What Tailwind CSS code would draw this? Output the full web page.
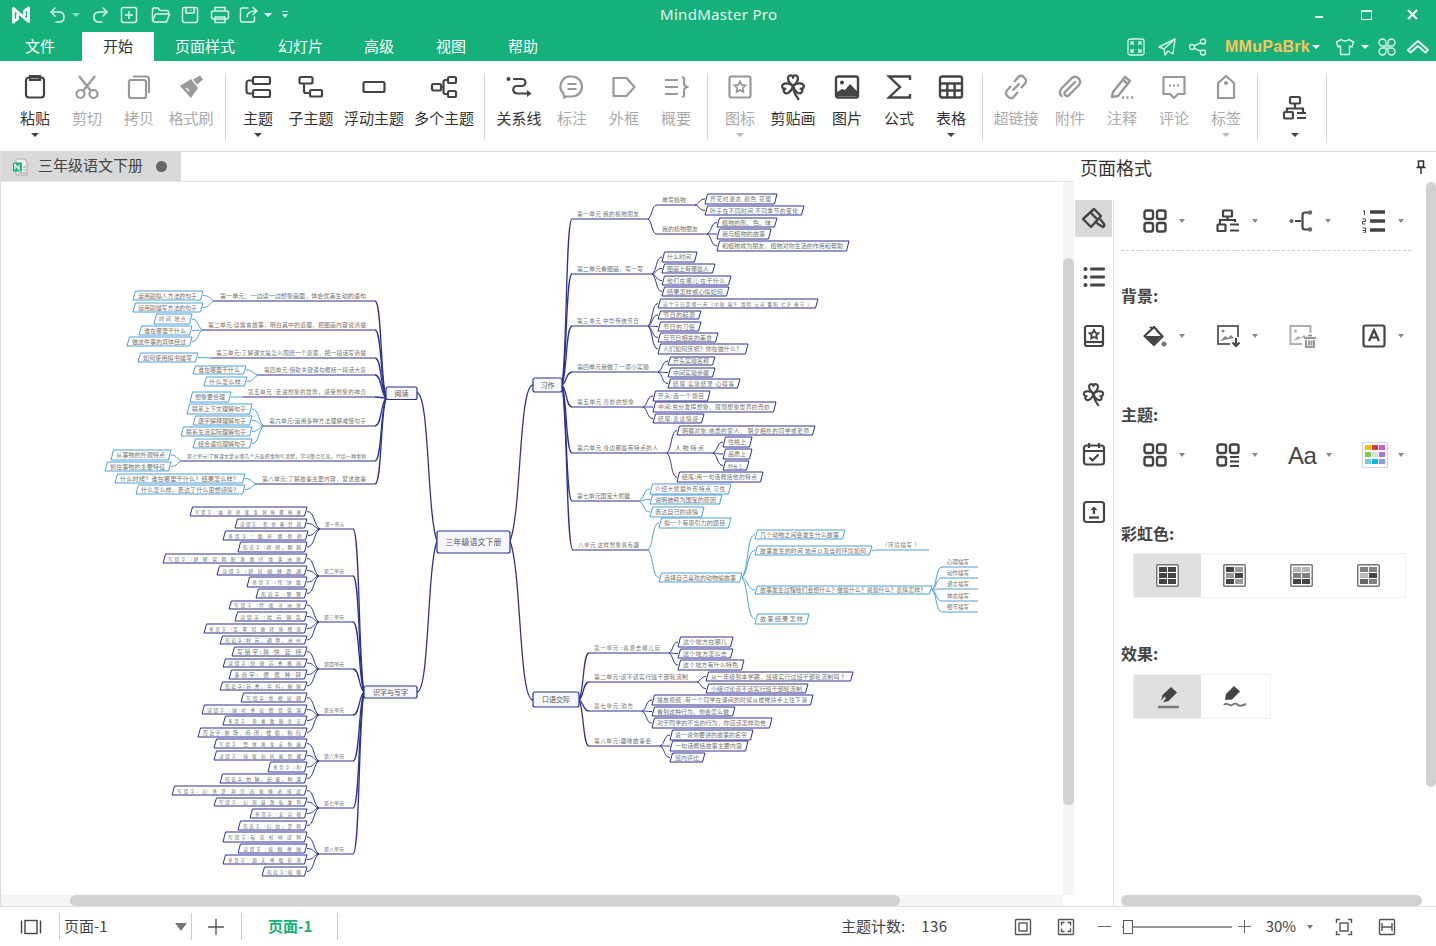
<!DOCTYPE html>
<html lang="zh">
<head>
<meta charset="utf-8">
<title>MindMaster Pro</title>
<script src="https://cdn.jsdelivr.net/npm/@tailwindcss/browser@4"></script>
</head>
<body>
<div class="w-[1436px] h-[946px] overflow-hidden flex flex-col bg-white text-[#333] [font-family:'Noto_Sans_CJK_SC','Noto_Sans',sans-serif]">

<!-- title + tabs -->
<header class="relative h-[61px] shrink-0 bg-[#16b07a] text-white">
  <div class="flex h-[29px] items-center">
    <svg class="ml-[10px] w-[22px] h-[20px]" viewBox="0 0 22 20" fill="none" stroke="#fff" stroke-width="2.800" stroke-linejoin="round" stroke-linecap="round"><path d="M3.500 17V3.500L18.500 16.500V3"/><path d="M3.500 17l4-3v-4M18.500 3l-4 3v4"/></svg>
    <svg class="ml-[17px] w-[18px] h-[18px]" viewBox="0 0 18 18" fill="none" stroke="#d8f3e8" stroke-width="1.600" stroke-linecap="round" stroke-linejoin="round"><path d="M6 2L2 6l4 4"/><path d="M2 6h8c3 0 5 2 5 5s-2 5-5 5H7"/></svg>
    <span class="ml-[5px] w-0 h-0 border-x-[4px] border-t-[4px] border-x-transparent border-t-[#8fd8bd]"></span>
    <svg class="ml-[11px] w-[18px] h-[18px]" viewBox="0 0 18 18" fill="none" stroke="#d8f3e8" stroke-width="1.600" stroke-linecap="round" stroke-linejoin="round"><path d="M12 2l4 4-4 4"/><path d="M16 6H8c-3 0-5 2-5 5s2 5 5 5h3"/></svg>
    <svg class="ml-[11px] w-[18px] h-[18px]" viewBox="0 0 18 18" fill="none" stroke="#d8f3e8" stroke-width="1.500"><rect x="1.500" y="1.500" width="15" height="15" rx="2"/><path d="M9 5v8M5 9h8"/></svg>
    <svg class="ml-[13px] w-[20px] h-[18px]" viewBox="0 0 20 18" fill="none" stroke="#d8f3e8" stroke-width="1.500" stroke-linejoin="round"><path d="M1.500 15V3.500a1.500 1.500 0 0 1 1.500-1.500h4l2 2.500h7a1.500 1.500 0 0 1 1.500 1.500V8"/><path d="M1.500 15l3-7h14l-3 8H3z"/></svg>
    <svg class="ml-[10px] w-[18px] h-[18px]" viewBox="0 0 18 18" fill="none" stroke="#d8f3e8" stroke-width="1.500"><rect x="1.500" y="1.500" width="15" height="15" rx="2"/><path d="M5 2v5h8V2M10 4v1"/></svg>
    <svg class="ml-[11px] w-[20px] h-[18px]" viewBox="0 0 20 18" fill="none" stroke="#d8f3e8" stroke-width="1.500" stroke-linejoin="round"><path d="M5 5V1.500h10V5"/><rect x="1.500" y="5" width="17" height="8" rx="2"/><path d="M5 11h10v5.500H5z"/></svg>
    <svg class="ml-[9px] w-[20px] h-[18px]" viewBox="0 0 20 18" fill="none" stroke="#d8f3e8" stroke-width="1.500" stroke-linecap="round" stroke-linejoin="round"><path d="M9 2H3a1.500 1.500 0 0 0-1.500 1.500v11A1.500 1.500 0 0 0 3 16h11a1.500 1.500 0 0 0 1.500-1.500V11"/><path d="M8 11c0-4 3-6 9-6M14 1.500L18 5l-4 3.500"/></svg>
    <span class="ml-[5px] w-0 h-0 border-x-[4px] border-t-[4px] border-x-transparent border-t-white"></span>
    <span class="ml-[10px] flex flex-col items-center gap-[2px]"><span class="w-[6px] h-[1.500px] bg-[#d8f3e8]"></span><span class="w-0 h-0 border-x-[3.500px] border-t-[4px] border-x-transparent border-t-[#d8f3e8]"></span></span>
    <div class="ml-auto flex items-center">
      <span class="w-[8px] h-[2px] bg-[#e6f7f0] mt-[4px]"></span>
      <span class="ml-[38px] w-[11px] h-[10px] border-[1.500px] border-t-[2.500px] border-[#e6f7f0]"></span>
      <svg class="ml-[35px] mr-[18px] w-[11px] h-[11px]" viewBox="0 0 11 11" stroke="#fff" stroke-width="2"><path d="M1 1l9 9M10 1l-9 9"/></svg>
    </div>
  </div>
  <span class="absolute left-[660px] top-[4px] text-[15px] leading-5 text-[#e4f6ef] tracking-[0.3px] [font-family:'Noto_Sans',sans-serif]">MindMaster Pro</span>
  <nav class="absolute left-0 top-[32px] h-[29px] w-full flex items-center text-[15px]">
    <span class="ml-[25px] w-[57px]">文件</span>
    <span class="w-[72px] h-full bg-white text-[#333] flex items-center justify-center">开始</span>
    <span class="ml-[21px] w-[103px]">页面样式</span>
    <span class="w-[86px]">幻灯片</span>
    <span class="w-[72px]">高级</span>
    <span class="w-[72px]">视图</span>
    <span class="w-[72px]">帮助</span>
    <div class="ml-auto flex items-center">
      <svg class="w-[18px] h-[18px]" viewBox="0 0 18 18" fill="none" stroke="#d8f3e8" stroke-width="1.300"><rect x="1" y="1" width="16" height="16" rx="2"/><path d="M4 7V4h3M14 7V4h-3M4 11v3h3M14 11v3h-3M4 4l3 3M14 4l-3 3M4 14l3-3M14 14l-3-3"/></svg>
      <svg class="ml-[13px] w-[18px] h-[18px]" viewBox="0 0 18 18" fill="none" stroke="#d8f3e8" stroke-width="1.400" stroke-linejoin="round"><path d="M17 1L1 9l5 2 1 6 3-4 5 3z"/><path d="M17 1L6 11"/></svg>
      <svg class="ml-[12px] w-[19px] h-[18px]" viewBox="0 0 19 18" fill="none" stroke="#d8f3e8" stroke-width="1.400"><circle cx="15" cy="3.500" r="2.500"/><circle cx="15" cy="14.500" r="2.500"/><circle cx="4" cy="9" r="2.500"/><path d="M6.200 7.800l6.600-3.200M6.200 10.200l6.600 3.200"/></svg>
      <span class="ml-[18px] font-bold text-[#fcc45e] [font-family:'Liberation_Sans',sans-serif] text-[16px] tracking-[0.3px]">MMuPaBrk</span>
      <span class="ml-[2px] w-0 h-0 border-x-[4px] border-t-[4px] border-x-transparent border-t-white"></span>
      <svg class="ml-[15px] w-[20px] h-[18px]" viewBox="0 0 20 18" fill="none" stroke="#d8f3e8" stroke-width="1.400" stroke-linejoin="round"><path d="M6.500 1.500c1 2 6 2 7 0l5 2.500-1.500 5-2.500-1v8.500h-9V8l-2.500 1-1.500-5z"/></svg>
      <span class="ml-[6px] w-0 h-0 border-x-[4px] border-t-[4px] border-x-transparent border-t-white"></span>
      <svg class="ml-[9px] w-[18px] h-[18px]" viewBox="0 0 18 18" fill="none" stroke="#d8f3e8" stroke-width="1.400"><path d="M8 8H4.500A3.500 3.500 0 1 1 8 4.500zM10 8h3.500A3.500 3.500 0 1 0 10 4.500zM8 10H4.500A3.500 3.500 0 1 0 8 13.500zM10 10h3.500a3.500 3.500 0 1 1-3.500 3.500z"/></svg>
      <svg class="ml-[10px] mr-[6px] w-[24px] h-[18px]" viewBox="0 0 24 18" fill="none" stroke="#e6f7f0" stroke-width="2" stroke-linejoin="round"><path d="M2 12L12 3l10 9-2.500 2.500L12 8l-7.500 6.500z"/></svg>
    </div>
  </nav>
</header>

<!-- ribbon -->
<section class="h-[91px] shrink-0 border-b border-[#d8d8d8] flex pl-[9px] text-[15px] leading-5 whitespace-nowrap">
  <div class="w-[52px] pt-[12px] flex flex-col items-center"><svg class="w-[28px] h-[28px]" viewBox="0 0 28 28" fill="none" stroke="#444" stroke-width="2.200"><rect x="5" y="4.500" width="18" height="20" rx="3"/><path d="M9 4.500V3h10v4H9z"/></svg><span class="mt-[7px]">粘贴</span><span class="mt-[5px] w-0 h-0 border-x-[4px] border-t-[4px] border-x-transparent border-t-[#444]"></span></div>
  <div class="w-[52px] pt-[12px] flex flex-col items-center text-[#aaa]"><svg class="w-[28px] h-[28px]" viewBox="0 0 28 28" fill="none" stroke="#999" stroke-width="2.200"><circle cx="7.500" cy="21" r="4"/><circle cx="20.500" cy="21" r="4"/><path d="M10 18L22 3M18 18L6 3"/></svg><span class="mt-[7px]">剪切</span></div>
  <div class="w-[52px] pt-[12px] flex flex-col items-center text-[#aaa]"><svg class="w-[28px] h-[28px]" viewBox="0 0 28 28" fill="none" stroke="#999" stroke-width="2.200"><rect x="4" y="7" width="17" height="18" rx="2"/><path d="M8 3.500h13a3 3 0 0 1 3 3V20" /></svg><span class="mt-[7px]">拷贝</span></div>
  <div class="w-[52px] pt-[12px] flex flex-col items-center text-[#aaa]"><svg class="w-[28px] h-[28px]" viewBox="0 0 28 28"><path fill="#999" d="M3 13l11-7 7 9-7 10z"/><path fill="#999" d="M16 6.500l4 5 6-5-3-4z"/><path d="M9 15l3 3" stroke="#fff" stroke-width="1.200"/></svg><span class="mt-[7px]">格式刷</span></div>
  <span class="ml-[8px] mt-[12px] w-px h-[67px] bg-[#d4d4d4]"></span>
  <div class="ml-[6px] w-[52px] pt-[12px] flex flex-col items-center"><svg class="w-[28px] h-[28px]" viewBox="0 0 28 28" fill="none" stroke="#444" stroke-width="2.200"><rect x="9" y="4" width="17" height="7" rx="1.500"/><rect x="9" y="17" width="17" height="7" rx="1.500"/><path d="M9 7.500H5a2.500 2.500 0 0 0-2.500 2.500v8A2.500 2.500 0 0 0 5 20.500h4"/></svg><span class="mt-[7px]">主题</span><span class="mt-[5px] w-0 h-0 border-x-[4px] border-t-[4px] border-x-transparent border-t-[#444]"></span></div>
  <div class="w-[54px] pt-[12px] flex flex-col items-center"><svg class="w-[28px] h-[28px]" viewBox="0 0 28 28" fill="none" stroke="#444" stroke-width="2.200"><rect x="2.500" y="4" width="13" height="6.500" rx="1.500"/><rect x="13" y="17" width="12" height="6.500" rx="1.500"/><path d="M7 10.500V18a2 2 0 0 0 2 2h4"/></svg><span class="mt-[7px]">子主题</span></div>
  <div class="w-[72px] pt-[12px] flex flex-col items-center"><svg class="w-[28px] h-[28px]" viewBox="0 0 28 28" fill="none" stroke="#444" stroke-width="2.200"><rect x="3.500" y="9" width="21" height="10" rx="1.500"/></svg><span class="mt-[7px]">浮动主题</span></div>
  <div class="w-[68px] pt-[12px] flex flex-col items-center"><svg class="w-[28px] h-[28px]" viewBox="0 0 28 28" fill="none" stroke="#444" stroke-width="2.200"><rect x="2" y="11" width="9" height="6.500" rx="1.500"/><rect x="18" y="4" width="8" height="6" rx="1.500"/><rect x="18" y="18" width="8" height="6" rx="1.500"/><path d="M11 14h2.500V9a2 2 0 0 1 2-2H18M13.500 14v5a2 2 0 0 0 2 2H18"/></svg><span class="mt-[7px]">多个主题</span></div>
  <span class="ml-[6px] mt-[12px] w-px h-[67px] bg-[#d4d4d4]"></span>
  <div class="ml-[8px] w-[52px] pt-[12px] flex flex-col items-center"><svg class="w-[28px] h-[28px]" viewBox="0 0 28 28" fill="none" stroke="#444" stroke-width="2.200" stroke-linecap="round"><circle cx="3.500" cy="6" r="2" fill="#444" stroke="none"/><path d="M9 6h8a3.500 3.500 0 0 1 0 7H12a3.500 3.500 0 0 0 0 7.500h10"/><path d="M22 17l4.500 3.500L22 24z" fill="#444" stroke="none"/></svg><span class="mt-[7px]">关系线</span></div>
  <div class="ml-[1px] w-[52px] pt-[12px] flex flex-col items-center text-[#aaa]"><svg class="w-[28px] h-[28px]" viewBox="0 0 28 28" fill="none" stroke="#999" stroke-width="2.200"><path d="M14 3.500a10 10 0 0 1 0 20H7l-.5 2-1-5A10 10 0 0 1 14 3.500z"/><path d="M9.500 11h9M9.500 16h9"/></svg><span class="mt-[7px]">标注</span></div>
  <div class="w-[52px] pt-[12px] flex flex-col items-center text-[#aaa]"><svg class="w-[28px] h-[28px]" viewBox="0 0 28 28" fill="none" stroke="#999" stroke-width="2.200" stroke-linejoin="round"><path d="M3.500 5h13l8 9-8 9h-13z"/></svg><span class="mt-[7px]">外框</span></div>
  <div class="w-[52px] pt-[12px] flex flex-col items-center text-[#aaa]"><svg class="w-[28px] h-[28px]" viewBox="0 0 28 28" fill="none" stroke="#999" stroke-width="2.200"><path d="M3 7h13M3 14h13M3 21h13"/><path d="M20 4c3 0 2 3 2 6s1 3 3 4c-2 1-3 1-3 4s1 6-2 6"/></svg><span class="mt-[7px]">概要</span></div>
  <span class="ml-[5px] mt-[12px] w-px h-[67px] bg-[#d4d4d4]"></span>
  <div class="ml-[6px] w-[52px] pt-[12px] flex flex-col items-center text-[#aaa]"><svg class="w-[28px] h-[28px]" viewBox="0 0 28 28" fill="none" stroke="#999" stroke-width="2.200"><rect x="3.500" y="3.500" width="21" height="21" rx="2"/><path d="M14 8.500l1.700 3.500 3.800.5-2.800 2.600.7 3.800-3.400-1.800-3.400 1.800.7-3.800-2.800-2.600 3.800-.5z" stroke-width="1.800"/></svg><span class="mt-[7px]">图标</span><span class="mt-[5px] w-0 h-0 border-x-[4px] border-t-[4px] border-x-transparent border-t-[#bbb]"></span></div>
  <div class="ml-[1px] w-[52px] pt-[12px] flex flex-col items-center"><svg class="w-[28px] h-[28px]" viewBox="0 0 24 24" fill="none" stroke="#444" stroke-width="2" stroke-linejoin="round"><path d="M12 11C7 8 6.500 2 10 2c1.200 0 2 1 2 2 0-1 .8-2 2-2 3.500 0 3 6-2 9z"/><path d="M12 11C7 8 6.500 2 10 2c1.200 0 2 1 2 2 0-1 .8-2 2-2 3.500 0 3 6-2 9z" transform="rotate(-110 12 11)"/><path d="M12 11C7 8 6.500 2 10 2c1.200 0 2 1 2 2 0-1 .8-2 2-2 3.500 0 3 6-2 9z" transform="rotate(110 12 11)"/><path d="M12 11c0 4 2 8 5 12"/></svg><span class="mt-[7px]">剪贴画</span></div>
  <div class="ml-[2px] w-[52px] pt-[12px] flex flex-col items-center"><svg class="w-[28px] h-[28px]" viewBox="0 0 28 28" fill="none" stroke="#444" stroke-width="2.400"><rect x="3" y="3.500" width="22" height="21" rx="2"/><circle cx="9" cy="9.500" r="2" fill="#444" stroke="none"/><path d="M4 23v-4l5-3 3 1 5-6 7 7v5z" fill="#444" stroke="none"/></svg><span class="mt-[7px]">图片</span></div>
  <div class="w-[52px] pt-[12px] flex flex-col items-center"><svg class="w-[28px] h-[28px]" viewBox="0 0 28 28" fill="none" stroke="#444" stroke-width="2.400"><path d="M25 7V3.500H4L15 14 4 24.500h21V21"/></svg><span class="mt-[7px]">公式</span></div>
  <div class="w-[52px] pt-[12px] flex flex-col items-center"><svg class="w-[28px] h-[28px]" viewBox="0 0 28 28" fill="none" stroke="#444" stroke-width="2.400"><rect x="3" y="3.500" width="22" height="21" rx="2"/><path d="M3 10.500h22M3 17.500h22M10.300 10.500v14M17.600 10.500v14"/></svg><span class="mt-[7px]">表格</span><span class="mt-[5px] w-0 h-0 border-x-[4px] border-t-[4px] border-x-transparent border-t-[#444]"></span></div>
  <span class="ml-[5px] mt-[12px] w-px h-[67px] bg-[#d4d4d4]"></span>
  <div class="ml-[7px] w-[52px] pt-[12px] flex flex-col items-center text-[#aaa]"><svg class="w-[28px] h-[28px]" viewBox="0 0 28 28" fill="none" stroke="#999" stroke-width="2.400"><path d="M12 9l4-4.500a3.500 3.500 0 0 1 6 0l1 1a3.500 3.500 0 0 1 0 5L19 15"/><path d="M16 19l-4 4.500a3.500 3.500 0 0 1-6 0l-1-1a3.500 3.500 0 0 1 0-5L9 13"/><path d="M10.500 17.500l7-7"/></svg><span class="mt-[7px]">超链接</span></div>
  <div class="ml-[2px] w-[52px] pt-[12px] flex flex-col items-center text-[#aaa]"><svg class="w-[28px] h-[28px]" viewBox="0 0 28 28" fill="none" stroke="#999" stroke-width="2.400" stroke-linecap="round"><path d="M19 9L9 19a2.500 2.500 0 0 0 3.500 3.500L23 12a5 5 0 0 0-7-7L5.500 15.500c-2 2.500-2 5.500 0 7.500"/></svg><span class="mt-[7px]">附件</span></div>
  <div class="w-[52px] pt-[12px] flex flex-col items-center text-[#aaa]"><svg class="w-[28px] h-[28px]" viewBox="0 0 28 28" fill="none" stroke="#999" stroke-width="2.400" stroke-linejoin="round"><path d="M5 19L17 4l5 4L10 23l-6 1z"/><path d="M15 7l5 4"/><path d="M14 24.500h2M18.500 24.500h2M23 24.500h2"/></svg><span class="mt-[7px]">注释</span></div>
  <div class="w-[52px] pt-[12px] flex flex-col items-center text-[#aaa]"><svg class="w-[28px] h-[28px]" viewBox="0 0 28 28" fill="none" stroke="#999" stroke-width="2.200" stroke-linejoin="round"><path d="M3.500 4h21v17H18l-4 4-4-4H3.500z"/><path d="M9 12.500h2M13 12.500h2M17 12.500h2"/></svg><span class="mt-[7px]">评论</span></div>
  <div class="w-[52px] pt-[12px] flex flex-col items-center text-[#aaa]"><svg class="w-[28px] h-[28px]" viewBox="0 0 28 28" fill="none" stroke="#999" stroke-width="2.200" stroke-linejoin="round"><path d="M6 10l8-7 8 7v15H6z"/><circle cx="14" cy="10" r="2" fill="#999" stroke="none"/></svg><span class="mt-[7px]">标签</span><span class="mt-[5px] w-0 h-0 border-x-[4px] border-t-[4px] border-x-transparent border-t-[#bbb]"></span></div>
  <span class="ml-[5px] mt-[12px] w-px h-[67px] bg-[#d4d4d4]"></span>
  <div class="ml-[11px] w-[52px] pt-[33px] flex flex-col items-center"><svg class="w-[28px] h-[28px]" viewBox="0 0 28 28" fill="none" stroke="#444" stroke-width="2.200"><rect x="9" y="3" width="10" height="6.500" rx="1"/><path d="M14 9.500v4M6 18v-3.500h16V18"/><rect x="3" y="18" width="9" height="6.500" rx="1"/><path d="M16 19h9M16 24h9"/></svg><span class="mt-[11px] w-0 h-0 border-x-[4px] border-t-[4px] border-x-transparent border-t-[#444]"></span></div>
  <span class="ml-[5px] mt-[12px] w-px h-[69px] bg-[#d4d4d4]"></span>
</section>

<!-- workspace -->
<main class="flex h-[754px] shrink-0">
  <div class="w-[1074px] flex flex-col border-l border-[#dedede]">
    <div class="h-[30px] shrink-0 border-b border-[#e4e4e4] flex">
      <div class="w-[180px] h-[29px] bg-[#d9d9d9] flex items-center">
        <svg class="ml-[11px] w-[16px] h-[18px]" viewBox="0 0 16 18"><path d="M4 1h8l3 3v13H4z" fill="#f4f4f4" stroke="#aaa"/><rect x="1" y="4.500" width="9" height="9" fill="#16b07a"/><path d="M3 11.500v-5l4 5v-5" fill="none" stroke="#fff" stroke-width="1.300"/><path d="M11 9h3M11 12h3M6 15h8" stroke="#999"/></svg>
        <span class="ml-[10px] pb-[2px] text-[15px] text-[#444]">三年级语文下册</span>
        <span class="ml-[13px] w-[11px] h-[11px] rounded-full bg-[#666]"></span>
      </div>
      <span class="w-[2px] bg-white"></span>
      <span class="flex-1"></span>
    </div>
    <div class="flex h-[713px] shrink-0">
      <svg id="map" class="w-[1062px] h-[713px] shrink-0" viewBox="1 182 1062 713"></svg>
      <div class="w-[11px] bg-[#f5f5f5] pt-[76px]"><div class="h-[547px] rounded-full bg-[#d2d2d2]"></div></div>
    </div>
    <div class="h-[11px] shrink-0 flex">
      <div class="w-[1062px] bg-[#f5f5f5] pl-[69px]"><div class="w-[830px] h-full rounded-full bg-[#d2d2d2]"></div></div>
    </div>
  </div>

  <aside class="w-[362px] flex flex-col">
    <div class="h-[32px] shrink-0 flex items-center pl-[6px] pr-[10px] pb-[2px]">
      <span class="text-[18px] leading-6 text-[#333]">页面格式</span>
      <svg class="ml-auto w-[10px] h-[14px]" viewBox="0 0 10 14" fill="none" stroke="#333" stroke-width="1.500"><path d="M2.500 1h5v6h-5zM.5 7.500h9M5 8v6"/></svg>
    </div>
    <div class="flex flex-1 min-h-0">
      <div class="w-[40px] mt-[16px] border-r border-[#dedede] pl-px flex flex-col gap-[22px]">
        <div class="w-[37px] h-[37px] bg-[#d9d9d9] flex items-center justify-center"><svg class="w-[26px] h-[26px]" viewBox="0 0 26 26" fill="none" stroke="#444" stroke-width="2.400" stroke-linejoin="round"><path d="M2 13L13 3l7 7-10 11z"/><path d="M14 15l3 3 5 3a2 2 0 0 0 1-3l-4-5"/><path d="M10 7l7 7"/></svg></div>
        <div class="w-[37px] h-[37px] -mt-px flex items-center justify-center"><svg class="w-[24px] h-[24px]" viewBox="0 0 24 24" fill="#444"><circle cx="3.500" cy="4" r="2"/><circle cx="3.500" cy="12" r="2"/><circle cx="3.500" cy="20" r="2"/><rect x="8" y="2.500" width="15" height="3" rx="1"/><rect x="8" y="10.500" width="15" height="3" rx="1"/><rect x="8" y="18.500" width="15" height="3" rx="1"/></svg></div>
        <div class="w-[37px] h-[37px] flex items-center justify-center"><svg class="w-[24px] h-[24px]" viewBox="0 0 24 24" fill="none" stroke="#444" stroke-width="2.200"><rect x="3" y="2" width="18" height="20" rx="2"/><path d="M3 18h18"/><path d="M12 6l1.500 2.800 3 .4-2.200 2.100.5 3-2.800-1.400-2.800 1.400.5-3-2.200-2.100 3-.4z" stroke-width="1.800"/></svg></div>
        <div class="w-[37px] h-[37px] flex items-center justify-center"><svg class="w-[25px] h-[25px]" viewBox="0 0 24 24" fill="none" stroke="#444" stroke-width="2" stroke-linejoin="round"><path d="M12 11C7 8 6.500 2 10 2c1.200 0 2 1 2 2 0-1 .8-2 2-2 3.500 0 3 6-2 9z"/><path d="M12 11C7 8 6.500 2 10 2c1.200 0 2 1 2 2 0-1 .8-2 2-2 3.500 0 3 6-2 9z" transform="rotate(-110 12 11)"/><path d="M12 11C7 8 6.500 2 10 2c1.200 0 2 1 2 2 0-1 .8-2 2-2 3.500 0 3 6-2 9z" transform="rotate(110 12 11)"/><path d="M12 11c0 4 2 8 5 12"/></svg></div>
        <div class="w-[37px] h-[37px] flex items-center justify-center"><svg class="w-[24px] h-[24px]" viewBox="0 0 24 24" fill="none" stroke="#444" stroke-width="2.200"><rect x="2" y="3.500" width="20" height="19" rx="2.500"/><path d="M2 9h20M7 1v5M17 1v5"/><path d="M7.500 15.500l3 3 6-6"/></svg></div>
        <div class="w-[37px] h-[37px] -mt-px flex items-center justify-center"><svg class="w-[24px] h-[24px]" viewBox="0 0 24 24" fill="none" stroke="#444" stroke-width="2.200"><rect x="2" y="2" width="20" height="20" rx="2.500"/><path d="M7 17.500h10" /><path d="M12 14V8" /><path d="M8.500 10L12 6.500 15.500 10z" fill="#444" stroke="none"/></svg></div>
      </div>
      <div class="w-[312px] flex flex-col">
        <div class="flex-1 pl-[7px] pt-[16px]">
          <div class="flex h-[42px] items-center">
            <div class="w-[73px] pl-[22px] flex items-center"><svg class="w-[24px] h-[24px]" viewBox="0 0 24 24" fill="none" stroke="#444" stroke-width="2.400"><rect x="1.500" y="1.500" width="8.500" height="8.500" rx="2"/><rect x="14" y="1.500" width="8.500" height="8.500" rx="2"/><rect x="1.500" y="14" width="8.500" height="8.500" rx="2"/><rect x="14" y="14" width="8.500" height="8.500" rx="2"/></svg><span class="ml-[12px] w-0 h-0 border-x-[3.500px] border-t-[4px] border-x-transparent border-t-[#888]"></span></div>
            <div class="w-[73px] pl-[22px] flex items-center"><svg class="w-[24px] h-[24px]" viewBox="0 0 24 24" fill="none" stroke="#444" stroke-width="2.200"><rect x="7" y="1.500" width="9" height="6" rx=".5"/><path d="M11.500 7.500V11M4 15v-4h15v2"/><rect x="1.500" y="15.500" width="8" height="6.500" rx=".5"/><path d="M14 15.500h9M14 21.500h9"/></svg><span class="ml-[12px] w-0 h-0 border-x-[3.500px] border-t-[4px] border-x-transparent border-t-[#888]"></span></div>
            <div class="w-[73px] pl-[22px] flex items-center"><svg class="w-[24px] h-[24px]" viewBox="0 0 24 24" fill="none" stroke="#444" stroke-width="2.200"><circle cx="2.500" cy="12" r="2" fill="#666" stroke="none"/><circle cx="21" cy="3.500" r="2.200" fill="#666" stroke="none"/><circle cx="21" cy="20.500" r="2.200" fill="#666" stroke="none"/><path d="M6 12h6M19 3.500h-3a2.500 2.500 0 0 0-2.500 2.500v12a2.500 2.500 0 0 0 2.500 2.500h3"/></svg><span class="ml-[12px] w-0 h-0 border-x-[3.500px] border-t-[4px] border-x-transparent border-t-[#888]"></span></div>
            <div class="w-[73px] pl-[22px] flex items-center"><svg class="w-[24px] h-[24px]" viewBox="0 0 24 24"><path d="M8 3h15M8 12h15M8 21h15" stroke="#444" stroke-width="3.500"/><path d="M1 2.500l1.500-1V6M.5 10h3v2.500h-3V15h3M.5 19h3v5h-3M.5 21.500h3" fill="none" stroke="#444" stroke-width="1"/></svg><span class="ml-[12px] w-0 h-0 border-x-[3.500px] border-t-[4px] border-x-transparent border-t-[#888]"></span></div>
          </div>
          <div class="mt-[8px] w-[290px] border-t border-dashed border-[#d0d0d0]"></div>
          <h3 class="mt-[34px] h-[22px] text-[16px] leading-[20px] font-bold text-[#444]">背景:</h3>
          <div class="mt-[8px] flex h-[42px] items-center">
            <div class="w-[73px] pl-[22px] flex items-center"><svg class="w-[24px] h-[24px]" viewBox="0 0 24 24"><path d="M1.500 12L11 3l8.500 9.500L11 21z" fill="none" stroke="#444" stroke-width="2.200" stroke-linejoin="round"/><path d="M2.500 12h16L11 20z" fill="#444"/><path d="M7 3l3 2" stroke="#444" stroke-width="2"/><circle cx="21" cy="20" r="2.500" fill="#777"/></svg><span class="ml-[12px] w-0 h-0 border-x-[3.500px] border-t-[4px] border-x-transparent border-t-[#888]"></span></div>
            <div class="w-[73px] pl-[22px] flex items-center"><svg class="w-[24px] h-[24px]" viewBox="0 0 24 24" fill="none" stroke="#666" stroke-width="2"><path d="M14 20H2V2h20v11"/><circle cx="7" cy="7" r="1.500" fill="#888" stroke="none"/><path d="M4 17l5-5 3 2 3-3 3 3z" fill="#888" stroke="none"/><path d="M20 14v8M16.500 18.500l3.500 3.500 3.500-3.500" stroke="#444"/></svg><span class="ml-[12px] w-0 h-0 border-x-[3.500px] border-t-[4px] border-x-transparent border-t-[#888]"></span></div>
            <div class="w-[73px] pl-[22px] flex items-center"><svg class="w-[28px] h-[24px]" viewBox="0 0 28 24" fill="none" stroke="#b0b0b0" stroke-width="2"><path d="M13 20H1.500V2h20v7"/><circle cx="6.500" cy="7" r="1.500" fill="#b0b0b0" stroke="none"/><path d="M4 17l5-5 3 2 3-3 2 2z" fill="#b0b0b0" stroke="none"/><path d="M15 14h12M17 16v7h8v-7M19 11.500h4M20 16.500v5M22.500 16.500v5" stroke="#999"/></svg></div>
            <div class="w-[73px] pl-[22px] flex items-center"><svg class="w-[24px] h-[24px]" viewBox="0 0 24 24" fill="none" stroke="#444" stroke-width="2.200"><rect x="1.500" y="1.500" width="21" height="21" rx="2"/><path d="M7 17l5-11 5 11M8.800 13.500h6.400"/></svg><span class="ml-[12px] w-0 h-0 border-x-[3.500px] border-t-[4px] border-x-transparent border-t-[#888]"></span></div>
          </div>
          <h3 class="mt-[47px] h-[22px] text-[16px] leading-[20px] font-bold text-[#444]">主题:</h3>
          <div class="mt-[8px] flex h-[42px] items-center">
            <div class="w-[73px] pl-[22px] flex items-center"><svg class="w-[24px] h-[24px]" viewBox="0 0 24 24" fill="none" stroke="#444" stroke-width="2.400"><rect x="1.500" y="1.500" width="8.500" height="8.500" rx="2"/><rect x="14" y="1.500" width="8.500" height="8.500" rx="2"/><rect x="1.500" y="14" width="8.500" height="8.500" rx="2"/><rect x="14" y="14" width="8.500" height="8.500" rx="2"/></svg><span class="ml-[12px] w-0 h-0 border-x-[3.500px] border-t-[4px] border-x-transparent border-t-[#888]"></span></div>
            <div class="w-[73px] pl-[22px] flex items-center"><svg class="w-[24px] h-[24px]" viewBox="0 0 24 24" fill="none" stroke="#444" stroke-width="2.400"><rect x="1.500" y="1.500" width="8.500" height="8.500" rx="2"/><rect x="14" y="1.500" width="8.500" height="8.500" rx="2"/><rect x="1.500" y="14" width="8.500" height="8.500" rx="2"/><path d="M14 14h9M14 18.500h9M14 23h9" stroke-width="2"/></svg><span class="ml-[12px] w-0 h-0 border-x-[3.500px] border-t-[4px] border-x-transparent border-t-[#888]"></span></div>
            <div class="w-[73px] pl-[21px] flex items-center"><span class="w-[27px] text-[24px] leading-[27px] tracking-[-0.5px] text-[#444] [font-family:'Liberation_Sans',sans-serif]">Aa</span><span class="ml-[11px] w-0 h-0 border-x-[3.500px] border-t-[4px] border-x-transparent border-t-[#888]"></span></div>
            <div class="w-[73px] pl-[22px] flex items-center"><svg class="w-[26px] h-[26px]" viewBox="0 0 26 26"><rect x=".5" y=".5" width="25" height="25" fill="#fff" stroke="#d0d8e8"/><rect x="3" y="3" width="6" height="5" fill="#f5c000"/><rect x="10" y="3" width="6" height="5" fill="#e0304f"/><rect x="17" y="3" width="6" height="5" fill="#c95fd0"/><rect x="3" y="10" width="6" height="5" fill="#78d048"/><rect x="10" y="10" width="6" height="5" fill="#dcdcdc"/><rect x="17" y="10" width="6" height="5" fill="#9a7be8"/><rect x="3" y="17" width="6" height="5" fill="#6ccfe0"/><rect x="10" y="17" width="6" height="5" fill="#10b4ee"/><rect x="17" y="17" width="6" height="5" fill="#8a9af5"/></svg><span class="ml-[10px] w-0 h-0 border-x-[3.500px] border-t-[4px] border-x-transparent border-t-[#888]"></span></div>
          </div>
          <h3 class="mt-[47px] h-[22px] text-[16px] leading-[20px] font-bold text-[#444]">彩虹色:</h3>
          <div class="mt-[8px] ml-[12px] w-[273px] h-[45px] border border-[#f0f0f0] flex">
            <div class="w-[67px] bg-[#e0e0e0] flex items-center justify-center"><svg class="w-[23px] h-[23px]" viewBox="0 0 23 23"><rect x=".75" y=".75" width="21.500" height="21.500" rx="1" fill="#fff" stroke="#777" stroke-width="1.500"/><path fill="#444" d="M3 3h8v5H3zM12 3h8v5h-8zM3 9h8v5H3zM12 9h8v5h-8zM3 15h8v5H3zM12 15h8v5h-8z"/></svg></div>
            <div class="w-[67px] flex items-center justify-center"><svg class="w-[23px] h-[23px]" viewBox="0 0 23 23"><rect x=".75" y=".75" width="21.500" height="21.500" rx="1" fill="#fff" stroke="#777" stroke-width="1.500"/><path fill="#444" d="M3 3h8v5H3zM12 9h8v5h-8zM3 15h8v5H3z"/><path fill="#999" d="M12 3h8v5h-8zM3 9h8v5H3zM12 15h8v5h-8z"/></svg></div>
            <div class="w-[67px] flex items-center justify-center"><svg class="w-[23px] h-[23px]" viewBox="0 0 23 23"><rect x=".75" y=".75" width="21.500" height="21.500" rx="1" fill="#fff" stroke="#777" stroke-width="1.500"/><path fill="#b5b5b5" d="M3 3h8v5H3zM12 3h8v5h-8z"/><path fill="#808080" d="M3 9h8v5H3zM12 9h8v5h-8z"/><path fill="#444" d="M3 15h8v5H3zM12 15h8v5h-8z"/></svg></div>
            <div class="w-[67px] flex items-center justify-center"><svg class="w-[23px] h-[23px]" viewBox="0 0 23 23"><rect x=".75" y=".75" width="21.500" height="21.500" rx="1" fill="#fff" stroke="#777" stroke-width="1.500"/><path fill="#808080" d="M3 3h8v5H3zM12 3h8v5h-8zM12 15h8v5h-8z"/><path fill="#bbb" d="M3 9h8v5H3z"/><path fill="#444" d="M12 9h8v5h-8z"/><path fill="#666" d="M3 15h8v5H3z"/></svg></div>
          </div>
          <h3 class="mt-[45px] h-[22px] text-[16px] leading-[20px] font-bold text-[#444]">效果:</h3>
          <div class="mt-[9px] ml-[12px] w-[138px] h-[45px] border border-[#f0f0f0] flex">
            <div class="w-[67px] bg-[#e0e0e0] flex items-center justify-center"><svg class="w-[24px] h-[24px]" viewBox="0 0 24 24"><path fill="#444" d="M5 16l1.500-6L15 2l6 5.500-8.500 8.500-5.500 1.500L10 13l-1.500-1.500z"/><path d="M2 22h21" stroke="#777" stroke-width="2.400"/></svg></div>
            <div class="w-[67px] flex items-center justify-center"><svg class="w-[26px] h-[24px]" viewBox="0 0 26 24"><path fill="#444" d="M3 15l1-6 8-8 6 5.500-8 8z"/><path d="M2 20c3-4 5 2 8 0s4-2 6 0 5 0 8-1" fill="none" stroke="#777" stroke-width="2"/></svg></div>
          </div>
        </div>
        <div class="h-[11px] shrink-0 pl-[7px]"><div class="w-[301px] h-full rounded-full bg-[#d2d2d2]"></div></div>
      </div>
      <div class="w-[10px] -mt-[2px]"><div class="h-[605px] rounded-full bg-[#d2d2d2]"></div></div>
    </div>
  </aside>
</main>

<!-- status bar -->
<footer class="h-[40px] shrink-0 border-t border-[#e0e0e0] flex items-center text-[15px] text-[#444] whitespace-nowrap">
  <svg class="ml-[20px] w-[22px] h-[16px]" viewBox="0 0 22 16" fill="none" stroke="#444" stroke-width="1.400"><rect x="5" y="1.500" width="12" height="13"/><path d="M1.500 1.500v13M20.500 1.500v13"/></svg>
  <span class="ml-[17px] h-[27px] border-l border-[#ccc]"></span>
  <span class="ml-[4px] w-[111px]">页面-1</span>
  <span class="w-0 h-0 border-x-[6px] border-t-[8px] border-x-transparent border-t-[#777]"></span>
  <span class="ml-[4px] h-[27px] border-l border-[#ccc]"></span>
  <svg class="ml-[16px] w-[16px] h-[16px]" viewBox="0 0 16 16" stroke="#555" stroke-width="1.400"><path d="M8 0v16M0 8h16"/></svg>
  <span class="ml-[17px] h-[27px] border-l border-[#ccc]"></span>
  <span class="ml-[26px] w-[69px] font-bold text-[#16b07a]">页面-1</span>
  <span class="h-[27px] border-l border-[#ccc]"></span>
  <span class="ml-[503px]">主题计数:</span>
  <span class="ml-[16px] tracking-[0.5px]">136</span>
  <svg class="ml-[66px] w-[18px] h-[18px]" viewBox="0 0 18 18" fill="none" stroke="#555" stroke-width="1.400"><rect x="1.500" y="1.500" width="15" height="15" rx="1"/><rect x="5" y="5" width="8" height="8"/></svg>
  <svg class="ml-[25px] w-[18px] h-[18px]" viewBox="0 0 18 18" fill="none" stroke="#555" stroke-width="1.400"><rect x="1.500" y="1.500" width="15" height="15" rx="1"/><path d="M4.500 7.500v-3h3M13.500 7.500v-3h-3M4.500 10.500v3h3M13.500 10.500v3h-3"/></svg>
  <span class="ml-[23px] w-[13px] h-px bg-[#666]"></span>
  <span class="ml-[11px] w-[110px] h-[2px] bg-[#999] relative"><span class="absolute left-[1px] -top-[6px] w-[10px] h-[14px] bg-white border border-[#555]"></span></span>
  <svg class="ml-[6px] w-[13px] h-[13px]" viewBox="0 0 13 13" stroke="#666"><path d="M6.500 0v13M0 6.500h13"/></svg>
  <span class="ml-[15px]">30%</span>
  <span class="ml-[11px] w-0 h-0 border-x-[3.500px] border-t-[4px] border-x-transparent border-t-[#777]"></span>
  <svg class="ml-[22px] w-[18px] h-[18px]" viewBox="0 0 18 18" fill="none" stroke="#555" stroke-width="1.400"><path d="M5 1.500H1.500V5M13 1.500h3.500V5M5 16.500H1.500V13M13 16.500h3.500V13"/><rect x="5" y="5" width="8" height="8"/></svg>
  <svg class="ml-[25px] w-[18px] h-[18px]" viewBox="0 0 18 18" fill="none" stroke="#555" stroke-width="1.400"><rect x="1.500" y="1.500" width="15" height="15" rx="1"/><path d="M4 5v8M14 5v8M4 9h10"/></svg>
</footer>
</div>

<script>
const NAVY='#2e3192',BLUE='#4c9fd8';
function B(t,a,b,y1,y2,ch,cc){return {t,a,b,y1,y2,ch:ch||[],cc}}
function L(t,a,b,y,ch,cc){return {t,a,b,y,ch:ch||[],cc}}
let out='';
function curve(px,py,cx,cy,c,w){
  const dx=cx-px,dy=cy-py;
  out+=`<path d="M${px} ${py}C${px+dx*.5} ${py+dy*.18} ${px+dx*.38} ${cy} ${cx} ${cy}" fill="none" stroke="${c}" stroke-width="${w}"/>`;
}
function txt(t,x1,x2,base){
  const w=x2-x1,fs=Math.min(6.2,w/t.length).toFixed(2);
  out+=`<text x="${x1}" y="${base}" font-size="${fs}" fill="#737373" textLength="${w}">${t}</text>`;
}
function draw(n,dir,color){
  const isBox=n.y1!==undefined;
  const cy=isBox?(n.y1+n.y2)/2:n.y;
  if(isBox){
    out+=`<path d="M${n.a+2.5} ${n.y1}H${n.b}L${n.b-2.5} ${n.y2}H${n.a}Z" fill="#fff" stroke="${color}" stroke-width="1"/>`;
    txt(n.t,n.a+5,n.b-6,cy+2.2);
  }else{
    out+=`<path d="M${n.a} ${n.y}H${n.b}" stroke="${color}" stroke-width="1"/>`;
    txt(n.t,n.a+5,n.b-9,n.y-2.8);
  }
  const cc=n.cc||color;
  n.ch.forEach(c=>{
    const ccy=c.y1!==undefined?(c.y1+c.y2)/2:c.y;
    if(dir<0)curve(n.a,cy,c.b,ccy,cc,1);else curve(n.b,cy,c.a,ccy,cc,1);
    draw(c,dir,cc);
  });
}
function main(t,a,b,y1,y2,fs){
  out+=`<rect x="${a}" y="${y1}" width="${b-a}" height="${y2-y1}" rx="2" fill="#f6f6fc" stroke="${NAVY}" stroke-width="1.200"/>`;
  out+=`<text x="${(a+b)/2}" y="${(y1+y2)/2+fs*.36}" font-size="${fs}" fill="#555" text-anchor="middle">${t}</text>`;
}
function branch(px,py,list,dir){
  list.forEach(n=>{curve(px,py,dir<0?n.b:n.a,n.y,NAVY,1.3);draw(n,dir,NAVY);});
}
/* 阅读 */
const read=[
 L('第一单元：一边读一边想象画面，体会优美生动的语句',215,375,301,[B('运用副拟人方法的句子',133,203,291,300),B('运用副描写方法的句子',133,203,303,312)],BLUE),
 L('第二单元:读寓言故事，明白其中的道理，把图画内容说清楚',203,375,330,[B('时间 地点',154,192,314,324),B('谁在哪里干什么',139,192,326,335),B('做这件事的具体经过',127,192,337,346)],BLUE),
 L('第三单元:了解课文是怎么围绕一个意思，把一段话写清楚',211,375,358,[B('如何使用拟书描写',138,198,353,362)],BLUE),
 L('第四单元:借助关键语句概括一段话大意',259,375,375,[B('谁在哪里干什么',193,246,366,374),B('什么怎么样',204,247,377,386)],BLUE),
 L('第五单元 :走进想象的世界，感受想象的神奇',243,375,397,[B('想象要合理',190,231,392,402)],BLUE),
 L('第六单元:运用多种方法理解难懂句子',264,375,426,[B('联系上下文理解句子',187,252,404,414),B('逐字解释理解句子',193,252,416,425),B('联系生活实际理解句子',181,252,427,436),B('结合语境理解句子',193,252,439,448)],BLUE),
 L('第七单元:了解课文是从哪几个方面把事物写清楚，学习整合信息，介绍一种事物',182,375,461,[B('从事物的外观特点',111,171,450,460),B('抓住事物的主要特征',105,171,462,471)],BLUE),
 L('第八单元:了解故事主要内容，复述故事',257,375,484,[B('什么时候？谁在哪里干什么？结果怎么样？',115,245,474,483),B('什么怎么样，表达了什么思想感情？',136,245,485,494)],BLUE)
];
/* 识字与写字 */
const lit=[
 L('第一单元',320,353,529,[B('写错字 :融 燕 修 蔑 洛 洞 棒 聚 梅 厘',190,307,507,516),B('读错字 :卷 修 暴 纤 疏',235,307,519,528),B('多音字 : 散 杆 换 骨 鹤',223,308,531,540),B('形近字 :疏 辨，翻 稿',238,307,542,552)]),
 L('第二单元',319,353,576,[B('写错字 :耕 释 架 期 配 准 赛 扦 戏 落 洲 匣',163,307,554,563),B('读错字 :耕 挖 蝴 蜂 跌 通',217,307,566,575),B('多音字 :伟 钟 散',247,307,577,587),B('形近字 :翼 翼',256,307,589,598)]),
 L('第三单元',319,353,622,[B('写错字 :伴 戏 寻 洲 匣',229,307,601,609),B('读错字 :戏 苏 钢 乱',235,307,612,621),B('多音字 :乱 累 切 便 转 塔 稀 旋',204,307,624,633),B('形近字:鲜 苏，通 尊，洲 州',220,307,636,644)]),
 L('第四单元',319,353,669,[B('写错字:猜 快 蓝 持',232,307,647,656),B('读错字:快 操 苏 秀 雅 园',223,307,659,667),B('多音字: 便 偶 种 转',229,307,670,679),B('形近字:苏 秀，半 抖，偷 愉',220,307,682,690)]),
 L('第五单元',319,353,715,[B('写错字:绝 密 鼠 翅',241,307,693,702),B('读错字 :绿 听 季 征 攒 撑 袋 溺',202,307,705,714),B('多音字: 卷 难 散 圈 舍 正',223,307,716,725),B('形近字:熟 场，闲 闭，楼 偷，抱 包',198,307,728,737)]),
 L('第六单元',319,353,761,[B('写错字 :警 缘 爽 鬼 宏 绚 姥',214,307,739,748),B('读错字 :绿 载 拍 执 雇 割 耀',214,307,751,760),B('多音字 :和',268,307,762,772),B('形近字:拍 猿，宏 童，鲜 潘',220,307,774,783)]),
 L('第七单元',319,353,808,[B('写错字: 幻 诱 罗 洞 宫 迅 速 摊 必 戒 武',172,307,786,795),B('写错字 :幻 洞 鼓 颈 私 薯 称',214,307,798,806),B('多音字 :宏 杂 极',250,307,809,818),B('形近字 :幻 幼，罗 称',238,307,821,830)]),
 L('第八单元',319,353,854,[B('写错字:卷 竞 杉 哨 咸 称',223,307,832,842),B('读错字 :摇 粮 替 贼',238,307,844,853),B('多音字 :趟 夫 啤 瘤 折 燕',223,307,855,864),B('形近字:摇 粮',262,307,867,876)])
];
/* 习作 */
const story=[
 L('第一单元 我的植物朋友',572,648,219,[
   L('单写植物',657,695,205,[B('开花时姿态 颜色 花瓣',705,777,194,204),B('叶子在不同时间 不同季节的变化',705,804,206,215)]),
   L('我的植物朋友',657,707,234,[B('植物的形、色、味',717,777,218,227),B('我与植物的故事',717,771,229,239),B('和植物成为朋友，植物对你生活的作用和帮助',717,849,241,251)])]),
 L('第二单元看图画，写一写',572,652,274,[B('什么时间',662,697,252,262),B('图画上有哪些人',662,715,264,273),B('他们在哪儿 在干什么',662,731,276,285),B('结果怎样或心情如何',662,729,287,296)]),
 L('第三单元 中华传统节日',572,648,326,[B('这个节日是哪一天（中秋 端午 清明 元宵 重阳 七夕 春节 ）',658,818,299,308),B('节日的起源',658,701,311,319),B('节日的习俗',658,701,322,331),B('与节日相关的美食',658,718,333,342),B('人们如何庆祝？你在做什么？',658,748,344,354)]),
 L('第四单元我做了一项小实验',572,658,372,[B('开头实验名称',668,715,357,365),B('中间实验步骤',668,715,368,377),B('结尾 实验结果 心得等',668,740,379,388)]),
 L('第五单元 奇妙的想象',572,643,407,[B('开头:选一个题目',653,710,391,401),B('中间:充分发挥想象，展现想象世界的奇妙',653,776,402,412),B('结尾:表达情感',653,704,414,423)]),
 L('第六单元 身边那些有特点的人',572,667,453,[B('明确对象:熟悉的家人、 朝夕相处的同学或老师',677,815,426,435),L('人物特点',670,713,453,[B('性格上',723,752,437,447),B('品质上',723,752,449,459),B('特长上',723,749,461,470)]),B('结尾:用一句话概括他的特点',677,763,472,482)]),
 L('第七单元国宝大熊猫',572,639,501,[B('介绍大熊猫外形特点 习性',650,731,484,494),B('说明被称为国宝的原因',650,722,495,504),B('表达自己的感情',650,704,507,517)],BLUE),
 L('八单元 这样想象真有趣',573,648,550,[B('拟一个有吸引力的题目',659,731,518,528),
   B('选择自己喜欢的动物编故事',659,742,573,582,[
     B('几个动物之间会发生什么故事',755,845,530,539),
     B('故事发生的时间 地点以及当时环境如何',755,872,546,555,[L('（环境描写 ）',877,929,550)]),
     B('故事发生过程他们会想什么？做些什么？说些什么？表情怎样？',755,932,586,594,[L('心理描写',942,978,567),L('动作描写',942,978,578),L('语言描写',942,978,589),L('神态描写',942,978,601),L('细节描写',942,978,612)]),
     B('故事结果怎样',755,809,614,624)])],BLUE)
];
/* 口语交际 */
const oral=[
 L('第一单元 :春游去哪儿玩',589,669,653,[B('这个地方在哪儿',678,733,637,647),B('这个地方怎么去',678,733,649,658),B('这个地方有什么特色',678,744,660,670)]),
 L('第二单元:该不该实行班干部轮流制',589,697,682,[B('从一年级到本学期，班级实行过班干部轮流制吗 ？',706,853,672,681),B('小组讨论该不该实行班干部轮流制',706,808,684,693)]),
 L('第七单元:劝告',589,642,711,[B('播放视频 :有一个同学在课间的时候从楼梯扶手上往下滑',652,813,695,705),B('看到这种行为，你会怎么做',652,735,707,716),B('对于同学的不当的行为，你应该怎样劝告',652,772,718,728)]),
 L('第八单元:趣味故事会',589,660,746,[B('说一说你要讲的故事的名字',670,753,730,740),B('一句话概括故事主要内容',670,748,741,751),B('班内评比',670,705,753,762)])
];
curve(437,541,417,393,NAVY,1.3);curve(437,541,417,692,NAVY,1.3);
curve(510,541,533,385,NAVY,1.3);curve(510,541,533,700,NAVY,1.3);
branch(386,398,read,-1);
branch(364,692,lit,-1);
branch(562,385,story,1);
branch(579,700,oral,1);
main('三年级语文下册',437,510,531,553,8);
main('阅读',386,417,387,399.5,7);
main('识字与写字',364,417,686,698,7);
main('习作',533,562,378,392,7);
main('口语交际',533,579,692,707,7);
document.getElementById('map').innerHTML=out;
</script>
</body>
</html>
